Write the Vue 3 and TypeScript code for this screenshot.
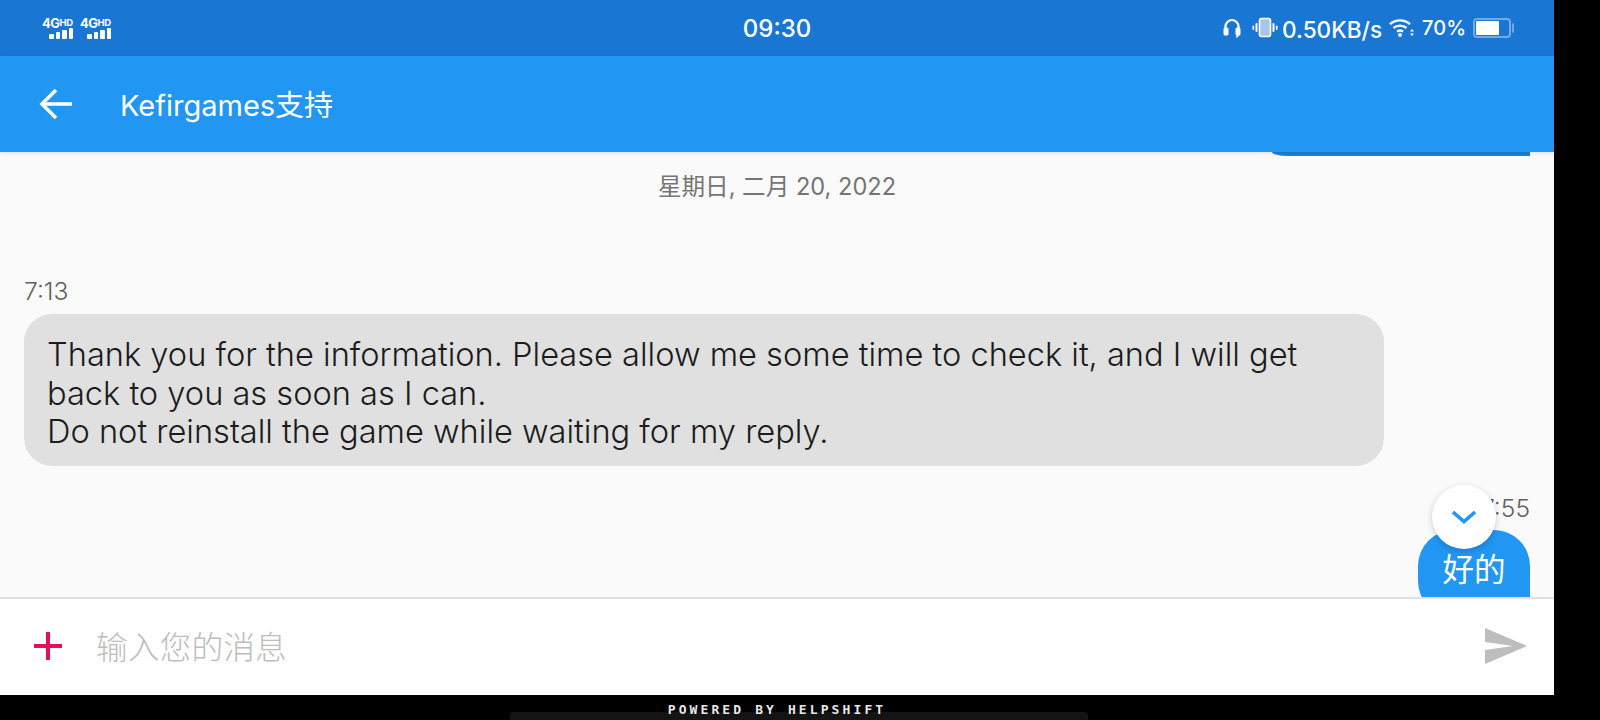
<script setup lang="ts">
const signals = [0, 1]
const bar_heights = [5, 7, 9, 11]
</script>

<template>
  <div class="screen">
    <div class="phone">
      <div class="status_bar">
        <div class="signals">
          <div v-for="s in signals" :key="s" class="signal">
            <div class="net">4G<span class="hd">HD</span></div>
            <div class="bars">
              <i v-for="h in bar_heights" :key="h" :style="{ height: h + 'px' }"></i>
            </div>
          </div>
        </div>
        <div class="clock">09:30</div>
        <div class="status_right">
          <svg class="ic_head" width="18" height="20" viewBox="0 0 18 20">
            <path d="M2.5 12V8.5a6.5 6.5 0 0 1 13 0V12" fill="none" stroke="#fff" stroke-width="2.2" />
            <rect x="0.5" y="9.5" width="5" height="8" rx="1.5" fill="#fff" />
            <rect x="12.5" y="9.5" width="5" height="8" rx="1.5" fill="#fff" />
            <path d="M15.5 16c0 1.5-.8 2.6-2.5 3" fill="none" stroke="#fff" stroke-width="1.4" />
          </svg>
          <svg class="ic_vib" width="26" height="22" viewBox="0 0 26 22">
            <rect x="7.5" y="1.5" width="11" height="18" rx="2" fill="#a9c5ee" stroke="#fff" stroke-width="1.6" />
            <rect x="3.5" y="6" width="2" height="9" rx="1" fill="#fff" />
            <rect x="20.5" y="6" width="2" height="9" rx="1" fill="#fff" />
            <rect x="0.5" y="8.5" width="1.6" height="4.5" rx=".8" fill="#fff" />
            <rect x="23.9" y="8.5" width="1.6" height="4.5" rx=".8" fill="#fff" />
          </svg>
          <span class="speed">0.50KB/s</span>
          <svg class="ic_wifi" width="26" height="20" viewBox="0 0 26 20">
            <path d="M1 6.2a15 15 0 0 1 20 0" fill="none" stroke="#fff" stroke-width="2.4" />
            <path d="M4.5 10a10 10 0 0 1 13 0" fill="none" stroke="#fff" stroke-width="2.4" />
            <path d="M8 13.6a5 5 0 0 1 6 0" fill="none" stroke="#fff" stroke-width="2.4" />
            <circle cx="11" cy="17" r="1.9" fill="#fff" />
            <path d="M23 11l2 2.4h-4zM23 18l2-2.4h-4z" fill="#fff" />
          </svg>
          <span class="pct">70%</span>
          <div class="battery"><div class="battery_fill"></div></div>
          <div class="battery_tip"></div>
        </div>
      </div>

      <header class="app_bar">
        <svg class="back" width="34" height="34" viewBox="0 0 34 34">
          <path d="M33 17H3M17 3L3 17l14 14" fill="none" stroke="#fff" stroke-width="3.6" />
        </svg>
        <h1 class="title">Kefirgames支持</h1>
      </header>

      <main class="messages">
        <div class="prev_bubble"></div>
        <div class="date">星期日, 二月 20, 2022</div>

        <div class="time">7:13</div>
        <div class="bubble_in">
          Thank you for the information. Please allow me some time to check it, and I will get<br />
          back to you as soon as I can.<br />
          Do not reinstall the game while waiting for my reply.
        </div>

        <div class="time time_out">7:55</div>
        <div class="bubble_out">好的</div>

        <button class="scroll_down">
          <svg width="26" height="16" viewBox="0 0 26 16">
            <path d="M2 3l11 9.5L24 3" fill="none" stroke="#2196f3" stroke-width="3.6" />
          </svg>
        </button>
      </main>

      <div class="composer">
        <svg class="plus" width="30" height="30" viewBox="0 0 30 30">
          <path d="M15 1v28M1 15h28" stroke="#e3105f" stroke-width="4" />
        </svg>
        <div class="placeholder">输入您的消息</div>
        <svg class="send" width="42" height="36" viewBox="0 0 42 36">
          <path d="M0 0l42 18L0 36V22l28-4L0 14z" fill="#bdbdbd" />
        </svg>
      </div>

      <footer class="powered">POWERED BY HELPSHIFT</footer>
    </div>
  </div>
</template>

<style>
html, body {
  margin: 0;
  background: #000;
}
</style>

<style scoped>
.screen {
  display: flex;
  width: 1600px;
  height: 720px;
  background: #000;
  overflow: hidden;
  font-family: Inter, "Noto Sans CJK SC", sans-serif;
}
.phone {
  width: 1554px;
  height: 720px;
  display: flex;
  flex-direction: column;
}

.status_bar {
  height: 56px;
  flex: none;
  background: #1976d2;
  color: #fff;
  display: grid;
  grid-template-columns: 1fr auto 1fr;
  align-items: center;
}
.signals {
  display: flex;
  gap: 7px;
  padding-left: 42px;
}
.signal {
  width: 31px;
}
.net {
  font-size: 13px;
  font-weight: 700;
  line-height: 10px;
  letter-spacing: -0.5px;
  white-space: nowrap;
}
.hd {
  font-size: 9.5px;
  vertical-align: 2px;
}
.bars {
  display: flex;
  align-items: flex-end;
  justify-content: flex-end;
  gap: 2px;
  height: 11px;
}
.bars i {
  width: 4.5px;
  background: #fff;
  border-radius: 1px;
}
.clock {
  font-size: 24px;
  font-weight: 500;
  padding-top: 1px;
}
.status_right {
  display: flex;
  align-items: center;
  justify-content: flex-end;
  padding-right: 40px;
}
.ic_head {
  margin-right: 11px;
}
.ic_vib {
  margin-right: 4px;
}
.speed {
  font-size: 22.6px;
  font-weight: 500;
  padding-top: 2px;
  margin-right: 7px;
}
.ic_wifi {
  margin-right: 7px;
}
.pct {
  font-size: 20px;
  font-weight: 500;
  margin-right: 7px;
}
.battery {
  box-sizing: content-box;
  width: 32px;
  height: 14px;
  padding: 1px;
  border: 2px solid #74a8e8;
  border-radius: 4px;
}
.battery_fill {
  width: 23px;
  height: 14px;
  background: #fff;
  border-radius: 1px;
}
.battery_tip {
  width: 2px;
  height: 10px;
  margin-left: 1px;
  background: #74a8e8;
  border-radius: 0 2px 2px 0;
}

.app_bar {
  height: 96px;
  flex: none;
  background: #2196f3;
  color: #fff;
  display: flex;
  align-items: center;
  padding-left: 39px;
  position: relative;
  z-index: 1;
  box-shadow: 0 1px 4px rgba(0, 0, 0, 0.12);
}
.title {
  margin: 0 0 2px 47px;
  font-size: 29px;
  font-weight: 400;
}

.messages {
  flex: 1;
  min-height: 0;
  position: relative;
  overflow: hidden;
  background: #fafafa;
  padding: 0 24px;
  display: flex;
  flex-direction: column;
}
.prev_bubble {
  align-self: flex-end;
  width: 258px;
  height: 4px;
  flex: none;
  background: #1e80d6;
  border-radius: 0 0 0 16px / 0 0 0 4px;
}
.date {
  margin-top: 16px;
  text-align: center;
  font-size: 23.6px;
  line-height: 30px;
  color: #757575;
}
.time {
  margin-top: 74px;
  font-size: 24.6px;
  font-weight: 300;
  line-height: 30px;
  color: #616161;
}
.bubble_in {
  margin-top: 8px;
  width: 1360px;
  height: 152px;
  flex: none;
  box-sizing: border-box;
  padding: 21px 23px;
  background: #e0e0e0;
  border-radius: 28px;
  color: #1c1c1c;
  font-size: 32.6px;
  font-weight: 300;
  line-height: 38.5px;
  white-space: nowrap;
}
.time_out {
  margin-top: 27px;
  text-align: right;
}
.bubble_out {
  align-self: flex-end;
  margin-top: 7px;
  width: 112px;
  height: 87px;
  flex: none;
  box-sizing: border-box;
  padding-top: 20px;
  text-align: center;
  background: #2196f3;
  border-radius: 36px 36px 0 36px;
  color: #fff;
  font-size: 31.5px;
  line-height: 40px;
}
.scroll_down {
  position: absolute;
  left: 1432px;
  top: 333px;
  width: 64px;
  height: 64px;
  padding: 0;
  border: 0;
  border-radius: 50%;
  background: #fff;
  box-shadow: 0 2px 6px rgba(0, 0, 0, 0.2);
  display: flex;
  align-items: center;
  justify-content: center;
}

.composer {
  height: 98px;
  flex: none;
  box-sizing: border-box;
  background: #fff;
  border-top: 2px solid #e0e0e0;
  display: flex;
  align-items: center;
  padding: 0 27px 2px 33px;
  position: relative;
}
.plus {
  flex: none;
}
.placeholder {
  flex: 1;
  margin: 0 0 3px 33px;
  font-size: 31.8px;
  font-weight: 300;
  color: #bdbdbd;
}
.send {
  flex: none;
}

.powered {
  height: 25px;
  flex: none;
  position: relative;
  z-index: 0;
  background: #000;
  color: #e8e8e8;
  font-family: "DejaVu Sans Mono", monospace;
  font-size: 13px;
  font-weight: 700;
  letter-spacing: 3.1px;
  line-height: 12px;
  padding-top: 9px;
  box-sizing: border-box;
  text-align: center;
}
.powered::before {
  content: "";
  position: absolute;
  left: 510px;
  top: 17px;
  width: 578px;
  height: 8px;
  background: #141414;
  border-radius: 4px 4px 0 0;
  z-index: -1;
}
</style>
